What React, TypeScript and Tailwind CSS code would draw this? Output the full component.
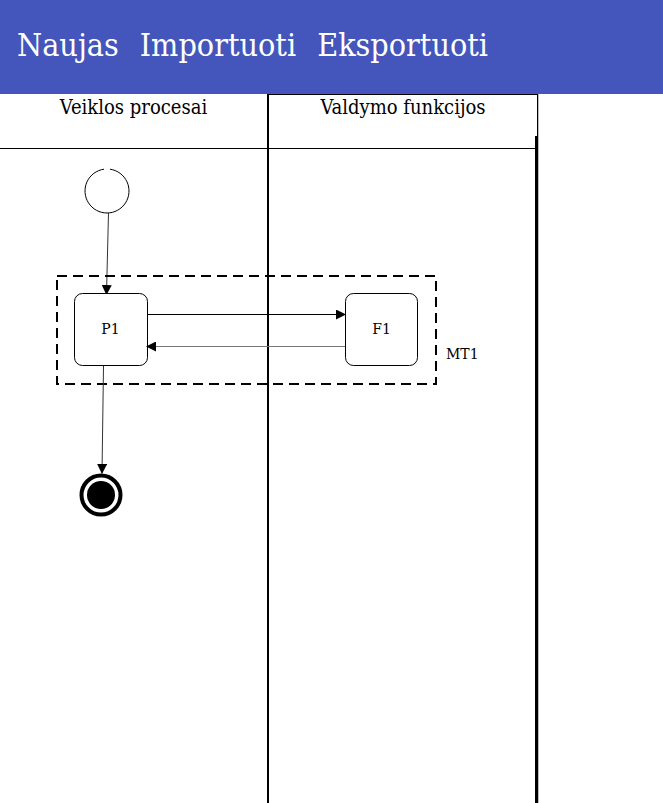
import React from "react";

function Diagram() {
  return (
    <svg
      className="absolute left-0 top-0 font-['DejaVu_Serif','Liberation_Serif',serif] [font-stretch:normal]"
      width="663"
      height="709"
      viewBox="0 94 663 709"
    >
      <defs>
        <marker id="arrow" markerWidth="10" markerHeight="10" refX="9" refY="5" orient="auto" markerUnits="userSpaceOnUse">
          <path d="M0,0 L10,5 L0,10 z" fill="#000" />
        </marker>
      </defs>

      {/* start */}
      <path d="M104,169.2 A22,22 0 1,0 110,169.2" fill="none" stroke="#000" strokeWidth="1" />
      <line x1="108.5" y1="213" x2="106.5" y2="294" stroke="#333" strokeWidth="1" markerEnd="url(#arrow)" />

      {/* group */}
      <rect x="57" y="276" width="379" height="108" fill="none" stroke="#000" strokeWidth="2" strokeDasharray="10 6" />
      <text x="446" y="359" fontSize="14" fill="#000">MT1</text>

      {/* P1 */}
      <rect x="74.5" y="293.5" width="73" height="72" rx="8" fill="#fff" stroke="#000" strokeWidth="1" />
      <text x="110.5" y="334" fontSize="14" textAnchor="middle" fill="#000">P1</text>

      {/* F1 */}
      <rect x="345.5" y="293.5" width="72" height="72" rx="8" fill="#fff" stroke="#000" strokeWidth="1" />
      <text x="381.5" y="334" fontSize="14" textAnchor="middle" fill="#000">F1</text>

      <line x1="147" y1="314.5" x2="345" y2="314.5" stroke="#000" strokeWidth="1" markerEnd="url(#arrow)" />
      <line x1="345" y1="346.5" x2="147" y2="346.5" stroke="#777" strokeWidth="1" markerEnd="url(#arrow)" />

      <line x1="103.5" y1="366" x2="102" y2="473" stroke="#333" strokeWidth="1" markerEnd="url(#arrow)" />

      {/* end */}
      <circle cx="101" cy="495" r="19.5" fill="none" stroke="#000" strokeWidth="4" />
      <circle cx="101" cy="495" r="14" fill="#000" />
    </svg>
  );
}

export default function App() {
  return (
    <div className="h-[803px] w-[663px] overflow-hidden bg-white font-['DejaVu_Serif','Liberation_Serif',serif] [font-stretch:condensed]">
      <div className="flex h-[94px] items-center gap-[21px] bg-[#4455bb] pb-[4px] pl-[17px] text-[32px] text-white">
        <span>Naujas</span>
        <span>Importuoti</span>
        <span>Eksportuoti</span>
      </div>
      <div className="relative flex h-[709px]">
        <div className="flex w-[267px] flex-col">
          <div className="h-[55px] border-b border-black pt-[1px] text-center text-[20px] leading-[24px] text-black">
            Veiklos procesai
          </div>
        </div>
        <div className="relative flex w-[271px] flex-col border-l-2 border-r border-t border-black shadow-[1px_0_0_#bbb]">
          <div className="h-[54px] border-b border-black text-center text-[20px] leading-[24px] text-black">
            Valdymo funkcijos
          </div>
          <div className="absolute bottom-0 right-[-1px] top-[41px] w-[3px] bg-black" />
        </div>
        <Diagram />
      </div>
    </div>
  );
}
